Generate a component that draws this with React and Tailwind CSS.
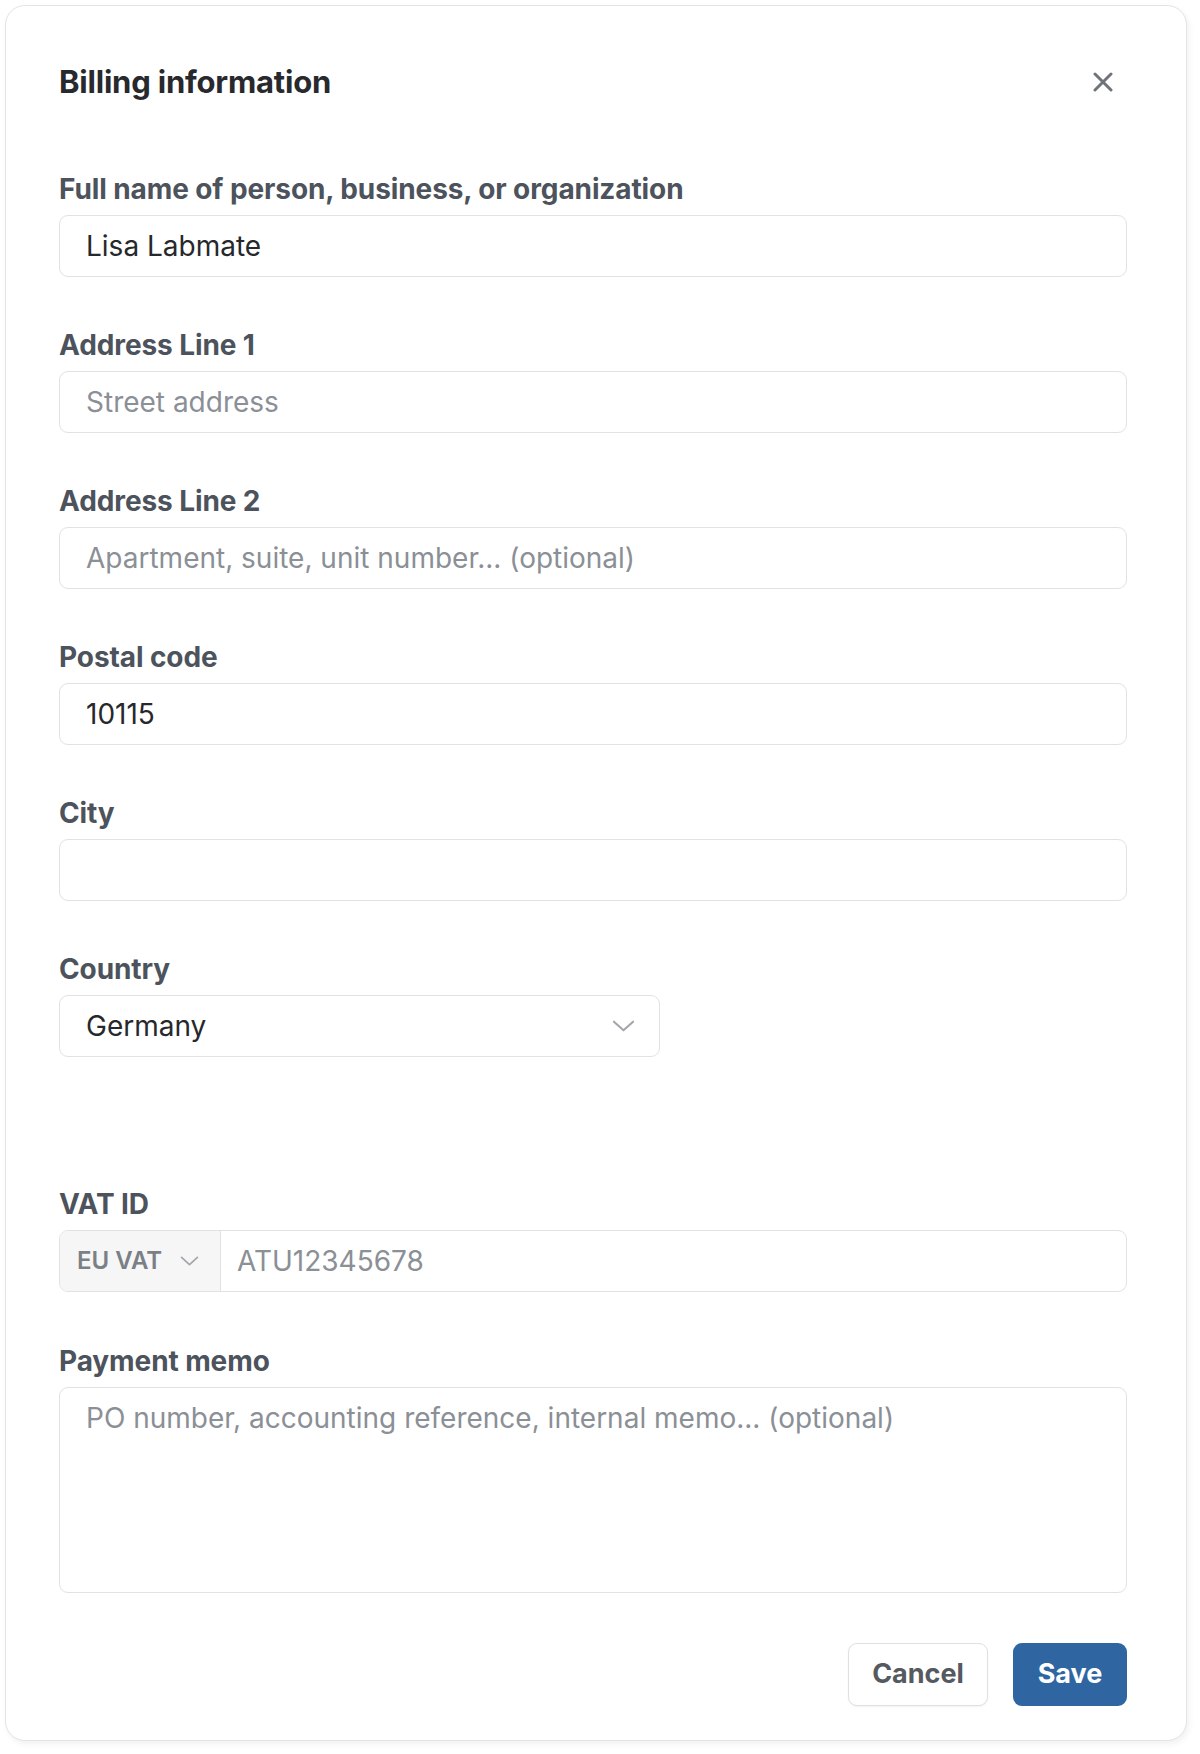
import React from 'react';

const font = { fontFamily: 'Inter, "Noto Sans", sans-serif' };

function Chevron({ className }) {
  return (
    <svg className={className} viewBox="0 0 24 12" fill="none" stroke="currentColor" strokeWidth="2.2" strokeLinecap="round" strokeLinejoin="round">
      <path d="M2 1.5l10 9 10-9" />
    </svg>
  );
}

function Field({ label, children, className = '' }) {
  return (
    <div className={className}>
      <label className="block h-[36px] leading-[38px] text-[28px] font-bold text-[#4d535c] mb-[9px] tracking-[-0.1px]">{label}</label>
      {children}
    </div>
  );
}

function TextInput({ value, placeholder }) {
  return (
    <input
      defaultValue={value}
      placeholder={placeholder}
      className="block w-full h-[62px] rounded-[9px] border border-[#e1e2e4] bg-white px-[26px] text-[28px] text-[#26282c] placeholder:text-[#8b8f96] outline-none"
    />
  );
}

export default function App() {
  const fields = [
    { label: 'Full name of person, business, or organization', value: 'Lisa Labmate' },
    { label: 'Address Line 1', placeholder: 'Street address' },
    { label: 'Address Line 2', placeholder: 'Apartment, suite, unit number... (optional)' },
    { label: 'Postal code', value: '10115' },
    { label: 'City', value: '' },
  ];

  return (
    <div className="min-h-screen bg-white" style={font}>
      <div className="ml-[5px] mt-[5px] w-[1182px] rounded-[20px] border border-[#e3e4e6] bg-white pl-[53px] pr-[59px] pt-[56px] pb-[34px] shadow-[2px_3px_6px_rgba(0,0,0,0.06)]">
        <div className="flex h-[40px] items-center justify-between">
          <h2 className="text-[31px] font-bold text-[#27292d] tracking-[-0.2px]">Billing information</h2>
          <button className="mr-[14px] text-[#6f737a]">
            <svg width="20" height="20" viewBox="0 0 20 20" fill="none" stroke="currentColor" strokeWidth="3" strokeLinecap="round">
              <path d="M2 2l16 16M18 2L2 18" />
            </svg>
          </button>
        </div>

        <div className="mt-[68px] flex flex-col gap-[49px]">
          {fields.map((f) => (
            <Field key={f.label} label={f.label}>
              <TextInput value={f.value} placeholder={f.placeholder} />
            </Field>
          ))}
          <Field label="Country">
            <div className="flex h-[62px] w-[601px] items-center justify-between rounded-[9px] border border-[#e1e2e4] bg-white pl-[26px] pr-[24px]">
              <span className="text-[28px] text-[#26282c]">Germany</span>
              <Chevron className="w-[23px] h-[12px] text-[#a3a6ac]" />
            </div>
          </Field>
        </div>

        <Field label="VAT ID" className="mt-[128px]">
          <div className="flex h-[62px] w-full overflow-hidden rounded-[9px] border border-[#e1e2e4]">
            <div className="flex w-[161px] shrink-0 items-center gap-[18px] border-r border-[#e1e2e4] bg-[#f6f6f7] pl-[17px]">
              <span className="text-[24px] font-semibold text-[#7b7f86]">EU VAT</span>
              <Chevron className="w-[19px] h-[10px] text-[#a3a6ac]" />
            </div>
            <input
              placeholder="ATU12345678"
              className="flex-1 px-[16px] text-[28px] text-[#26282c] placeholder:text-[#8b8f96] outline-none"
            />
          </div>
        </Field>

        <Field label="Payment memo" className="mt-[50px]">
          <textarea
            placeholder="PO number, accounting reference, internal memo... (optional)"
            className="block h-[206px] w-full resize-none rounded-[9px] border border-[#e1e2e4] px-[26px] py-[11px] text-[28px] leading-[38px] text-[#26282c] placeholder:text-[#8b8f96] outline-none"
          />
        </Field>

        <div className="mt-[50px] flex justify-end gap-[25px]">
          <button className="h-[63px] w-[140px] rounded-[9px] border border-[#dfe0e2] bg-white text-[27px] font-bold text-[#555960] shadow-[0_1px_2px_rgba(0,0,0,0.05)]">
            Cancel
          </button>
          <button className="h-[63px] w-[114px] rounded-[9px] bg-[#2f66a1] text-[27px] font-bold text-white">
            Save
          </button>
        </div>
      </div>
    </div>
  );
}
